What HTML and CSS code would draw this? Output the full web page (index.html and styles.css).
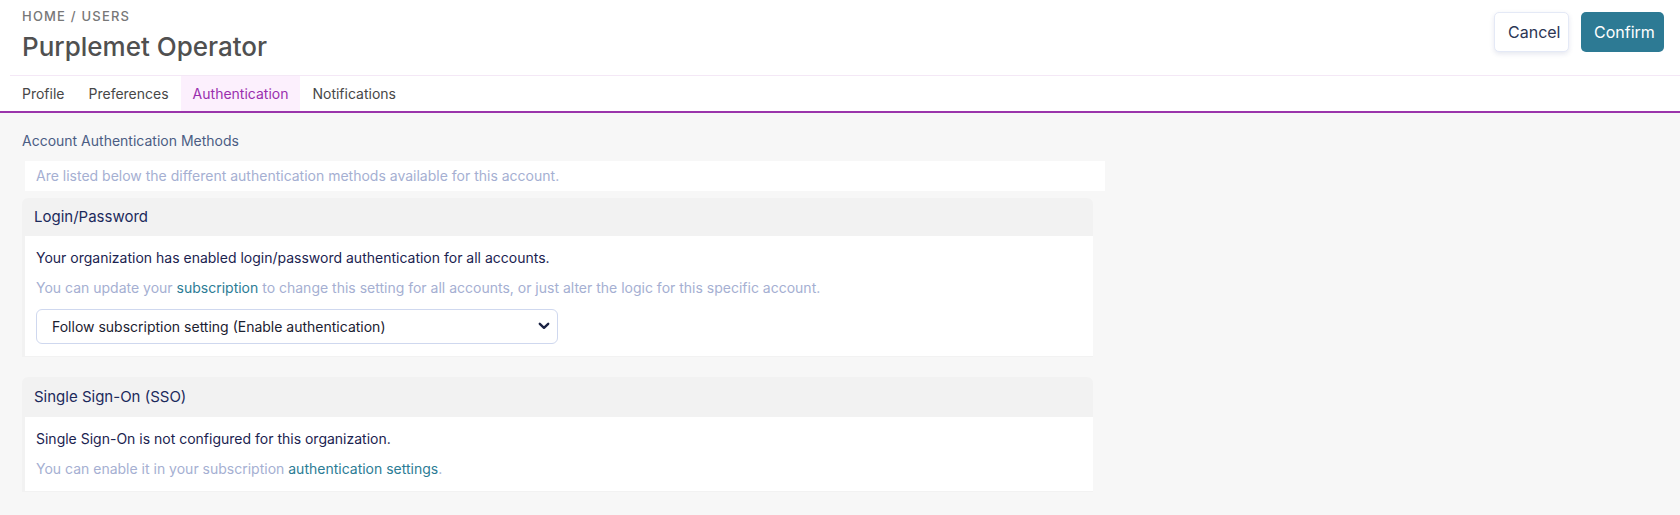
FILE: index.html
```html
<!DOCTYPE html>
<html lang="en">
  <head>
    <meta charset="UTF-8" />
    <meta name="viewport" content="width=device-width, initial-scale=1.0" />
    <title>Purplemet Operator</title>
    <link rel="stylesheet" href="styles.css">
  </head>
  <body>
    <!-- page header -->
    <div class="top-bar">
      <div class="page-header">
        <div class="page-title">
          <div class="breadcrumb">Home / Users</div>
          <h1>Purplemet Operator</h1>
        </div>
        <div class="header-actions">
          <button class="btn btn-cancel">Cancel</button>
          <button class="btn btn-confirm">Confirm</button>
        </div>
      </div>

      <!-- tabs -->
      <nav class="tabs">
        <a class="tab">Profile</a>
        <a class="tab">Preferences</a>
        <a class="tab active">Authentication</a>
        <a class="tab">Notifications</a>
      </nav>
    </div>

    <!-- content -->
    <div class="content">
      <div class="section-label">Account Authentication Methods</div>
      <div class="section-desc">Are listed below the different authentication methods available for this account.</div>

      <div class="card">
        <div class="card-header">Login/Password</div>
        <div class="card-body">
          <p class="text-main">Your organization has enabled login/password authentication for all accounts.</p>
          <p class="text-muted">You can update your <a class="link">subscription</a> to change this setting for all accounts, or just alter the logic for this specific account.</p>
          <div class="select-wrap">
            <select class="select">
              <option>Follow subscription setting (Enable authentication)</option>
              <option>Enable authentication</option>
              <option>Disable authentication</option>
            </select>
            <svg class="select-arrow" width="12" height="8" viewBox="0 0 12 8">
              <path d="M1.8 1.8 L6 5.8 L10.2 1.8" fill="none" stroke="#1b2344" stroke-width="2.4" stroke-linecap="round" stroke-linejoin="round" />
            </svg>
          </div>
        </div>
      </div>

      <div class="card card-sso">
        <div class="card-header">Single Sign-On (SSO)</div>
        <div class="card-body">
          <p class="text-main">Single Sign-On is not configured for this organization.</p>
          <p class="text-muted">You can enable it in your subscription <a class="link">authentication settings</a>.</p>
        </div>
      </div>
    </div>
  </body>
</html>
```

FILE: styles.css
```css
body {
  margin: 0;
  font-family: Inter, "Noto Sans", sans-serif;
  background: #f7f7f7;
  color: #1b2450;
}

/* header */
.top-bar {
  background: #ffffff;
}
.page-header {
  display: flex;
  justify-content: space-between;
  align-items: flex-start;
  margin-left: 10px;
  padding: 0 16px 0 12px;
  height: 76px;
  box-sizing: border-box;
  border-bottom: 1px solid #f4e8f6;
}
.page-title {
  padding-top: 8px;
}
.breadcrumb {
  font-size: 13px;
  font-weight: 500;
  letter-spacing: 1.2px;
  text-transform: uppercase;
  color: #777777;
  line-height: 16px;
}
.page-title h1 {
  margin: 7px 0 0;
  font-size: 26px;
  font-weight: 500;
  color: #505050;
  line-height: 32px;
}
.header-actions {
  display: flex;
  gap: 12px;
  padding-top: 12px;
}
.btn {
  font-family: inherit;
  font-size: 16px;
  height: 40px;
  border-radius: 5px;
  cursor: pointer;
  padding: 0 13px;
}
.btn-cancel {
  background: #ffffff;
  color: #2c3654;
  border: 1px solid #e4e9f6;
  box-shadow: 0 2px 5px rgba(40, 60, 120, 0.12);
  width: 75px;
}
.btn-confirm {
  background: #2d7a94;
  color: #ffffff;
  border: none;
  width: 83px;
}

/* tabs */
.tabs {
  display: flex;
  padding-left: 10px;
  border-bottom: 2px solid #9a35ab;
}
.tab {
  padding: 0 12px;
  height: 35px;
  line-height: 35px;
  font-size: 14px;
  color: #474747;
  cursor: pointer;
}
.tab.active {
  background: #fcf0fd;
  color: #9a2fae;
}

/* content */
.content {
  padding: 18px 22px 20px;
}
.section-label {
  font-size: 14px;
  line-height: 20px;
  color: #4b5d84;
}
.section-desc {
  margin: 10px 0 0 3px;
  width: 1080px;
  box-sizing: border-box;
  background: #ffffff;
  padding: 0 11px;
  line-height: 30px;
  font-size: 14px;
  color: #a5afd2;
}

.card {
  width: 1071px;
  margin-top: 7px;
  background: #f2f2f2;
  border-radius: 6px 6px 0 0;
  padding-bottom: 1px;
}
.card + .card {
  margin-top: 20px;
}
.card-header {
  height: 38px;
  line-height: 38px;
  padding: 0 12px;
  font-size: 15px;
  color: #1c2a5c;
}
.card-sso .card-header {
  height: 40px;
  line-height: 40px;
}
.card-body {
  margin-left: 3px;
  background: #ffffff;
  padding: 12px 11px 12px;
}
.card-body p {
  margin: 0;
  font-size: 14px;
  line-height: 20px;
}
.card-body p + p {
  margin-top: 10px;
}
.text-main {
  color: #1b2350;
}
.text-muted {
  color: #a5afd2;
}
.link {
  color: #2c7c95;
  cursor: pointer;
}

.select-wrap {
  position: relative;
  width: 522px;
  margin-top: 11px;
}
.select {
  appearance: none;
  width: 100%;
  height: 35px;
  box-sizing: border-box;
  border: 1px solid #cfd8ef;
  border-radius: 6px;
  background: #ffffff;
  padding: 0 15px;
  font-family: inherit;
  font-size: 14px;
  color: #1b2130;
}
.select-arrow {
  position: absolute;
  right: 8px;
  top: 13px;
  pointer-events: none;
}
```
